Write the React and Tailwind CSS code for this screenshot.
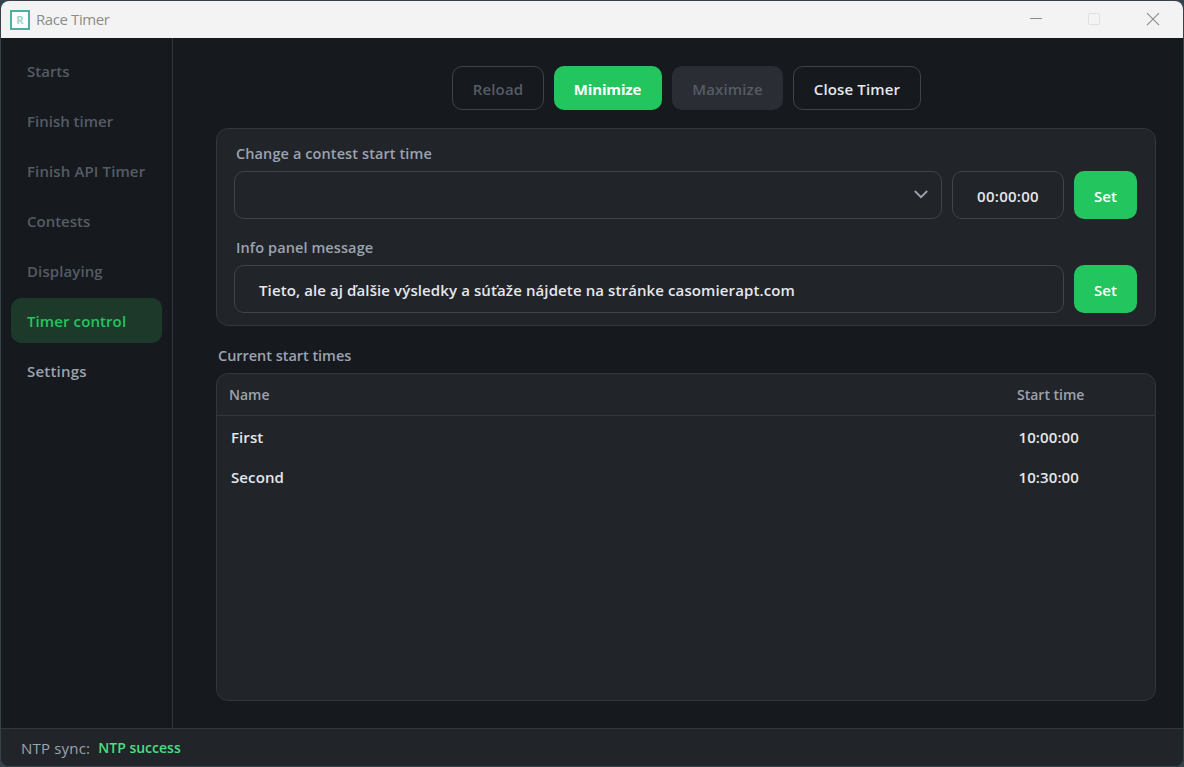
import clsx from 'clsx';

const navItems = [
  { label: 'Starts', className: 'text-[#555c66]' },
  { label: 'Finish timer', className: 'text-[#555c66]' },
  { label: 'Finish API Timer', className: 'text-[#555c66] tracking-[0.12px]' },
  { label: 'Contests', className: 'text-[#555c66]' },
  { label: 'Displaying', className: 'text-[#555c66] tracking-[0.1px]' },
  { label: 'Timer control', className: 'bg-[#1d392a] text-[#22c55e] tracking-[0.1px]' },
  { label: 'Settings', className: 'text-[#9ca3af] tracking-[0.2px]' }
];

const startTimes = [
  { name: 'First', time: '10:00:00' },
  { name: 'Second', time: '10:30:00' }
];

function TitleBar() {
  return (
    <header className="flex h-[37px] shrink-0 items-center bg-[#f3f3f3] pl-[9px]">
      <div className="flex size-5 items-center justify-center border-2 border-[#4db0a2] bg-white text-[11px] font-bold text-[#9fd3cb]">
        R
      </div>
      <span className="ml-1.5 pb-0.5 text-[15px] font-normal tracking-[-0.4px] text-[#8c8c8c]">
        Race Timer
      </span>
      <div className="ml-auto flex">
        <svg className="h-[37px] w-[58px]" viewBox="0 0 58 37" fill="none" stroke="#8a8a8a">
          <path d="M23 17.5h12" />
        </svg>
        <svg className="h-[37px] w-[58px]" viewBox="0 0 58 37" fill="none" stroke="#e0e0e0">
          <rect x="23.5" y="12.5" width="11" height="11" rx="1" />
        </svg>
        <svg className="h-[37px] w-[60px]" viewBox="0 0 60 37" fill="none" stroke="#8a8a8a">
          <path d="M24 12.2l12 12M36 12.2l-12 12" strokeWidth="1.1" />
        </svg>
      </div>
    </header>
  );
}

function Sidebar() {
  return (
    <nav className="flex w-[172px] shrink-0 flex-col gap-[5px] border-r border-[#33373d] px-2.5 pt-2.5">
      {navItems.map((item) => (
        <button
          key={item.label}
          className={clsx('h-[45px] rounded-[10px] pl-4 text-left whitespace-nowrap', item.className)}>
          {item.label}
        </button>
      ))}
    </nav>
  );
}

function Toolbar() {
  return (
    <div className="flex h-11 shrink-0 justify-center gap-2.5 tracking-[0.15px]">
      <button className="w-[92px] rounded-[10px] border border-[#3d444e] pt-0.5 pl-px text-[#555c66]">
        Reload
      </button>
      <button className="w-[108px] rounded-[10px] bg-[#22c55e] pt-0.5 font-bold tracking-[-0.15px] text-white">
        Minimize
      </button>
      <button className="w-[111px] rounded-[10px] bg-[#2a2d33] pt-0.5 pl-px text-[#555c66]">
        Maximize
      </button>
      <button className="w-32 rounded-[10px] border border-[#3d444e] pt-0.5 pl-px text-[#e5e7eb]">
        Close Timer
      </button>
    </div>
  );
}

function SetButton() {
  return <button className="w-[63px] rounded-[10px] bg-[#22c55e] pt-0.5 text-white">Set</button>;
}

function ControlPanel() {
  return (
    <section className="mt-[18px] flex h-[198px] shrink-0 flex-col rounded-xl border border-[#33373d] bg-[#212429] pt-[13px] pr-[18px] pl-[17px]">
      <label className="h-[29px] pl-0.5 text-[14.5px] tracking-[0.1px] text-[#9ca3af]">
        Change a contest start time
      </label>
      <div className="flex h-12 gap-2.5">
        <div className="flex flex-1 items-start justify-end rounded-[10px] border border-[#3d444e]">
          <svg className="mt-4 mr-[13px] h-3 w-3.5" viewBox="0 0 14 12" fill="none" stroke="#9ca3af">
            <path d="M.8 3l6.2 6.2L13.2 3" strokeWidth="1.8" />
          </svg>
        </div>
        <div className="flex w-28 items-center justify-center rounded-[10px] border border-[#3d444e] pt-0.5 tracking-[0.28px] text-[#e5e7eb]">
          00:00:00
        </div>
        <SetButton />
      </div>
      <label className="mt-[17px] h-[29px] pl-0.5 text-[14.5px] tracking-[0.1px] text-[#9ca3af]">
        Info panel message
      </label>
      <div className="flex h-12 gap-2.5">
        <div className="flex flex-1 items-center rounded-[10px] border border-[#3d444e] pt-0.5 pl-6 tracking-[0.11px] whitespace-nowrap text-[#e5e7eb]">
          Tieto, ale aj ďalšie výsledky a súťaže nájdete na stránke casomierapt.com
        </div>
        <SetButton />
      </div>
    </section>
  );
}

function StartTimes() {
  return (
    <>
      <h2 className="mt-[18px] h-[29px] shrink-0 pl-0.5 text-[14.5px] tracking-[-0.04px] text-[#9ca3af]">
        Current start times
      </h2>
      <section className="h-[328px] rounded-xl border border-[#33373d] bg-[#212429]">
        <div className="flex h-[42px] items-center border-b border-[#33373d] pl-3 text-[14px] text-[#9ca3af]">
          <span className="w-[788px]">Name</span>
          <span>Start time</span>
        </div>
        <div className="pt-px">
          {startTimes.map((row) => (
            <div
              key={row.name}
              className="flex h-10 items-center pl-3.5 tracking-[0.1px] text-[#e5e7eb]">
              <span className="w-[787.5px]">{row.name}</span>
              <span>{row.time}</span>
            </div>
          ))}
        </div>
      </section>
    </>
  );
}

function StatusBar() {
  return (
    <footer className="flex h-[38px] shrink-0 items-center gap-2 border-t border-[#33373d] bg-[#212429] pl-5">
      <span className="font-normal tracking-[0.2px] text-[#9ca3af]">NTP sync:</span>
      <span className="text-[14px] text-[#4ade80]">NTP success</span>
    </footer>
  );
}

function App() {
  return (
    <div className="h-[767px] w-[1184px] bg-[#35424a] p-px font-['Open_Sans',sans-serif] text-[15px] leading-6 font-semibold">
      <div className="flex h-[765px] flex-col overflow-hidden rounded-lg bg-[#16191d]">
        <TitleBar />
        <div className="flex min-h-0 flex-1">
          <Sidebar />
          <main className="flex flex-1 flex-col pt-7 pr-[27px] pl-[43px]">
            <Toolbar />
            <ControlPanel />
            <StartTimes />
          </main>
        </div>
        <StatusBar />
      </div>
    </div>
  );
}

export default App;
